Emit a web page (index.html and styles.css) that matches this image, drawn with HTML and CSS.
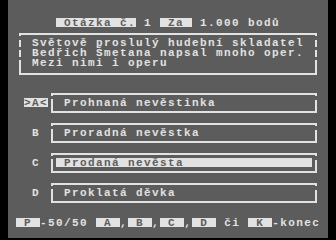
FILE: index.html
```
<!DOCTYPE html>
<html>
<head>
    <title>Kvíz</title>
    <link rel="stylesheet" href="styles.css">
</head>
<body>
    <div class="screen">
        <div class="title"><span class="inv"> Otázka č.</span> 1 <span class="inv"> Za </span> 1.000 bodů</div>

        <div class="question">
            <div class="line">Světově proslulý hudební skladatel</div>
            <div class="line">Bedřich Šmetana napsal mnoho oper.</div>
            <div class="line">Mezi nimi i operu</div>
        </div>

        <div class="answers">
            <div class="answer">
                <div class="key"><span class="inv">&gt;A&lt;</span></div>
                <div class="box"><div class="text">Prohnaná nevěstinka</div></div>
            </div>
            <div class="answer">
                <div class="key">B</div>
                <div class="box"><div class="text">Proradná nevěstka</div></div>
            </div>
            <div class="answer">
                <div class="key">C</div>
                <div class="box"><div class="text selected">Prodaná nevěsta</div></div>
            </div>
            <div class="answer">
                <div class="key">D</div>
                <div class="box"><div class="text">Proklatá děvka</div></div>
            </div>
        </div>

        <div class="footer"> <span class="inv"> P </span>-50/50 <span class="inv"> A </span>,<span class="inv"> B </span>,<span class="inv"> C </span>,<span class="inv"> D </span> či <span class="inv"> K </span>-konec</div>
    </div>
</body>
</html>
```

FILE: styles.css
```
body {
    margin: 0;
    padding: 0;
    background-color: #000;
}

.screen {
    margin-left: 8px;
    width: 320px;
    height: 238px;
    padding-top: 18px;
    box-sizing: border-box;
    background-color: #5c5c5c;
    color: #e2e2e2;
    font-family: "Liberation Mono", "DejaVu Sans Mono", monospace;
    font-weight: bold;
    font-size: 11px;
    /* 6.6px glyph + 1.4px = 8px character cells */
    letter-spacing: 1.4px;
    line-height: 11px;
}

.inv {
    display: inline-block;
    height: 9px;
    background-color: #e2e2e2;
    color: #5c5c5c;
    white-space: pre;
}

.title,
.footer {
    height: 10px;
    white-space: pre;
}

.title {
    padding-left: 48px;
}

/* question frame: sides are broken between text rows */
.question {
    margin-top: 5px;
    margin-left: 11px;
    width: 298px;
    height: 42px;
    box-sizing: border-box;
    padding: 5px 0 0 13px;
    background:
        linear-gradient(#e2e2e2, #e2e2e2) top / 100% 2px no-repeat,
        linear-gradient(#e2e2e2, #e2e2e2) bottom / 100% 2px no-repeat,
        linear-gradient(#e2e2e2 3px, transparent 3px 7px, #e2e2e2 7px 14px, transparent 14px 17px, #e2e2e2 17px 24px, transparent 24px 27px, #e2e2e2 27px) left / 2px 100% no-repeat,
        linear-gradient(#e2e2e2 3px, transparent 3px 7px, #e2e2e2 7px 14px, transparent 14px 17px, #e2e2e2 17px 24px, transparent 24px 27px, #e2e2e2 27px) right / 2px 100% no-repeat;
}

.line {
    height: 10px;
    white-space: nowrap;
}

.answers {
    margin-top: 18px;
    display: flex;
    flex-direction: column;
    gap: 10px;
}

.answer {
    display: flex;
    height: 20px;
}

.key {
    width: 24px;
    height: 10px;
    margin-left: 16px;
    margin-right: 3px;
    padding-top: 5px;
    text-align: center;
}

.box {
    width: 266px;
    height: 20px;
    box-sizing: border-box;
    padding: 5px;
    background:
        linear-gradient(#e2e2e2, #e2e2e2) top / 100% 2px no-repeat,
        linear-gradient(#e2e2e2, #e2e2e2) bottom / 100% 2px no-repeat,
        linear-gradient(#e2e2e2 3px, transparent 3px 6px, #e2e2e2 6px) left / 2px 100% no-repeat,
        linear-gradient(#e2e2e2 3px, transparent 3px 7px, #e2e2e2 7px) right / 2px 100% no-repeat;
}

.text {
    height: 9px;
    padding-left: 8px;
    white-space: nowrap;
}

.text.selected {
    background-color: #e2e2e2;
    color: #5c5c5c;
}

.footer {
    margin-top: 15px;
}
```
